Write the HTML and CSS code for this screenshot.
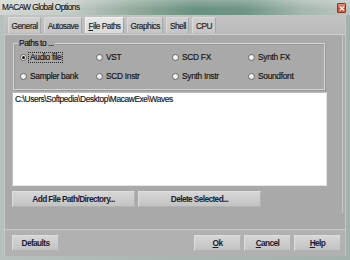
FILE: index.html
```html
<!DOCTYPE html>
<html>
<head>
<meta charset="utf-8">
<link rel="stylesheet" href="styles.css">
</head>
<body>
<div class="window">
  <div class="titlebar">
    <span class="title">MACAW Global Options</span>
    <span class="close"><svg width="6" height="5" viewBox="0 0 6 5"><path d="M0.8 0.5 L5.2 4.5 M5.2 0.5 L0.8 4.5" stroke="#fff" stroke-width="1.3"/></svg></span>
  </div>
  <div class="client">
    <div class="tabs">
      <span class="tab">General</span>
      <span class="tab">Autosave</span>
      <span class="tab active"><u>F</u>ile Paths</span>
      <span class="tab">Graphics</span>
      <span class="tab">Shell</span>
      <span class="tab">CPU</span>
    </div>
    <div class="panel">
      <div class="group">
        <span class="legend">Paths to ...</span>
        <div class="radios">
          <label class="radio"><span class="dot checked"></span><span class="lbl focus">Audio file</span></label>
          <label class="radio"><span class="dot"></span><span class="lbl">VST</span></label>
          <label class="radio"><span class="dot"></span><span class="lbl">SCD FX</span></label>
          <label class="radio"><span class="dot"></span><span class="lbl">Synth FX</span></label>
          <label class="radio"><span class="dot"></span><span class="lbl">Sampler bank</span></label>
          <label class="radio"><span class="dot"></span><span class="lbl">SCD Instr</span></label>
          <label class="radio"><span class="dot"></span><span class="lbl">Synth Instr</span></label>
          <label class="radio"><span class="dot"></span><span class="lbl">Soundfont</span></label>
        </div>
      </div>
      <div class="list">C:\Users\Softpedia\Desktop\MacawExe\Waves</div>
      <div class="btnrow">
        <span class="btn wide">Add File Path/Directory...</span>
        <span class="btn wide">Delete Selected...</span>
      </div>
    </div>
    <div class="bottom">
      <span class="btn small">Defaults</span>
      <span class="spacer"></span>
      <span class="btn small"><u>O</u>k</span>
      <span class="btn small"><u>C</u>ancel</span>
      <span class="btn small"><u>H</u>elp</span>
    </div>
  </div>
</div>
</body>
</html>
```

FILE: styles.css
```css
* { box-sizing: border-box; }
html, body { margin: 0; padding: 0; }
body {
  width: 350px;
  height: 260px;
  overflow: hidden;
  font-family: "Liberation Sans", Arial, sans-serif;
  font-size: 8.4px;
  color: #111;
  -webkit-text-stroke: 0.15px currentColor;
}
.window {
  width: 350px;
  height: 260px;
  display: flex;
  flex-direction: column;
  background: linear-gradient(90deg, #b7c0bd 0%, #a9b5b1 50%, #a3b1ad 100%);
}
.titlebar {
  height: 15px;
  flex: none;
  display: flex;
  align-items: center;
  padding-left: 2px;
  background:
    linear-gradient(rgba(255,255,255,0.25), rgba(255,255,255,0) 60%),
    linear-gradient(90deg, #d2d6d3 0%, #c3cbc6 20%, #93ab9d 38%, #6a917f 55%, #6f9585 70%, #a4b6ad 86%, #bcc6c1 100%);
}
.title {
  font-size: 8.2px;
  letter-spacing: -0.5px;
  color: #111;
  text-shadow: 0 0 3px rgba(255,255,255,0.9);
}
.close {
  margin-left: auto;
  margin-right: 4px;
  margin-top: 1px;
  width: 9px;
  height: 10px;
  border-radius: 1px;
  border: 1px solid #803a2a;
  background: linear-gradient(#ec9178, #cf4a2e 55%, #d9603f);
  display: flex;
  align-items: center;
  justify-content: center;
}
.close svg { display: block; }
.client {
  flex: 1;
  margin: 0 4px 4px 4px;
  display: flex;
  flex-direction: column;
  background: #a9a9a9;
  border-left: 1px solid #c6c6c6;
  border-right: 1px solid #c6c6c6;
}
.tabs {
  height: 20px;
  flex: none;
  display: flex;
  gap: 3px;
  padding: 2px 0 0 3px;
  background: linear-gradient(#c3c3c3, #bababa);
  border-bottom: 1px solid #cfcfcf;
}
.tab {
  height: 16px;
  padding: 0 2.5px;
  display: flex;
  align-items: center;
  font-size: 8.3px;
  letter-spacing: -0.48px;
  color: #1a1a1a;
  background: linear-gradient(#d0d0d0, #c5c5c5);
  border: 1px solid #dadada;
  border-right-color: #a8a8a8;
  border-bottom: none;
}
.tab.active {
  background: linear-gradient(#e8e8e8, #d8d8d8);
  border-color: #f2f2f2;
  border-right-color: #a0a0a0;
}
.panel {
  height: 178px;
  flex: none;
  padding: 8px 0 0 7px;
  border-right: 1px solid #c8c8c8;
  margin-right: 2px;
}
.group {
  margin-left: 1px;
  width: 312px;
  height: 47px;
  padding: 0 0 0 4px;
  border: 1px solid #d4d4d4;
  box-shadow: inset 1px 1px 0 #9a9a9a, 1px 1px 0 #9a9a9a;
}
.legend {
  display: block;
  width: fit-content;
  margin-top: -6px;
  padding: 0 1px;
  line-height: 10px;
  height: 10px;
  background: #a9a9a9;
  letter-spacing: -0.45px;
}
.radios {
  display: grid;
  grid-template-columns: 76px 76px 76px 76px;
  grid-auto-rows: 19px;
}
.radio {
  display: flex;
  align-items: center;
  padding-left: 2px;
}
.dot {
  width: 7px;
  height: 7px;
  border-radius: 50%;
  border: 1px solid #6e6e6e;
  background: radial-gradient(circle at 35% 35%, #ffffff, #d8d8d8);
  flex: none;
  display: flex;
  align-items: center;
  justify-content: center;
  margin-right: 1px;
}
.dot.checked::after {
  content: "";
  width: 3px;
  height: 3px;
  border-radius: 50%;
  background: #111;
}
.lbl {
  padding: 0 1px;
  line-height: 9px;
  letter-spacing: -0.3px;
  border: 1px solid transparent;
}
.lbl.focus { border: 1px dotted #222; }
.list {
  margin-top: 2px;
  width: 315px;
  height: 94px;
  background: #fff;
  border: 1px solid #bdbdbd;
  border-right-color: #e6e6e6;
  border-bottom-color: #e6e6e6;
  padding: 1px 2px;
  letter-spacing: -0.4px;
  color: #111;
}
.btnrow {
  display: flex;
  gap: 3px;
  margin-top: 5px;
}
.btn {
  height: 16px;
  display: flex;
  align-items: center;
  justify-content: center;
  font-weight: bold;
  font-size: 8.3px;
  letter-spacing: -0.6px;
  color: #1b1b33;
  -webkit-text-stroke: 0;
  background: linear-gradient(#d6d6d6, #c3c3c3);
  border: 1px solid #dedede;
  border-right-color: #b2b2b2;
  border-bottom-color: #b2b2b2;
}
.btn.wide { width: 123px; }
.btn.small { width: 47px; }
.bottom {
  margin-top: 16px;
  flex: 1;
  display: flex;
  align-items: center;
  gap: 3px;
  padding: 0 4px 0 7px;
  background: #b1b1b1;
  border-top: 1px solid #c9c9c9;
}
.spacer { flex: 1; }
u { text-decoration: underline; }
```
